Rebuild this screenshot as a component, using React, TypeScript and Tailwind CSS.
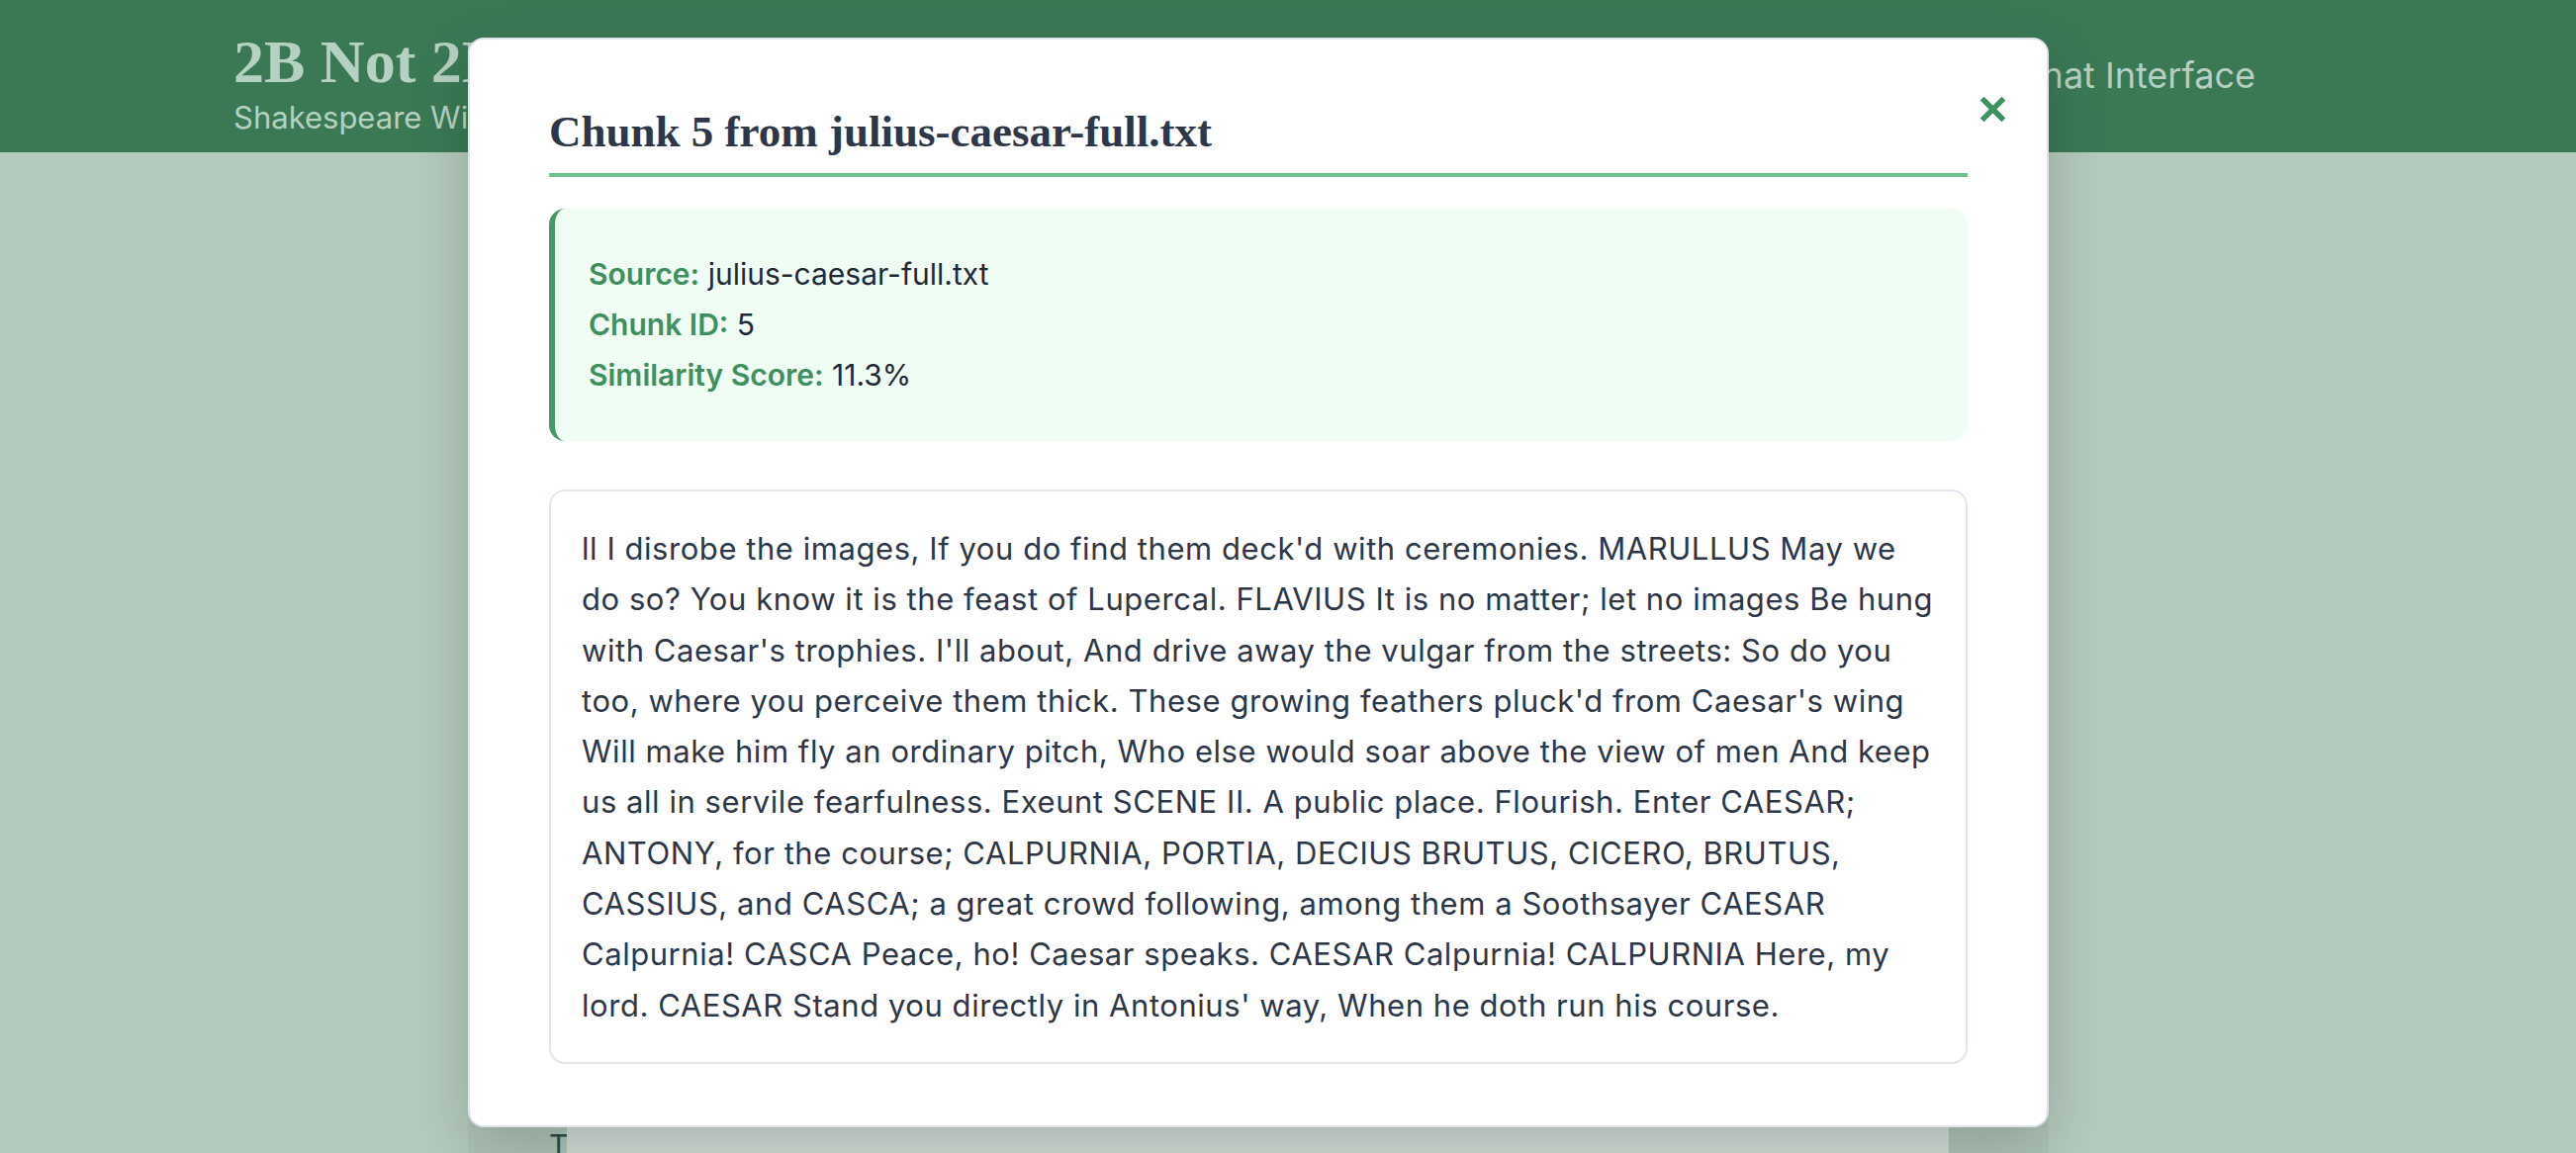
import { useState } from 'react';

const chunkText =
    "ll I disrobe the images, If you do find them deck'd with ceremonies. MARULLUS May we do so? You know it is the feast of Lupercal. FLAVIUS It is no matter; let no images Be hung with Caesar's trophies. I'll about, And drive away the vulgar from the streets: So do you too, where you perceive them thick. These growing feathers pluck'd from Caesar's wing Will make him fly an ordinary pitch, Who else would soar above the view of men And keep us all in servile fearfulness. Exeunt SCENE II. A public place. Flourish. Enter CAESAR; ANTONY, for the course; CALPURNIA, PORTIA, DECIUS BRUTUS, CICERO, BRUTUS, CASSIUS, and CASCA; a great crowd following, among them a Soothsayer CAESAR Calpurnia! CASCA Peace, ho! Caesar speaks. CAESAR Calpurnia! CALPURNIA Here, my lord. CAESAR Stand you directly in Antonius' way, When he doth run his course.";

const sans = "font-['Inter','Noto_Sans',sans-serif]";

export default function App() {
    const [open, setOpen] = useState(true);

    return (
        <div className={`relative h-[1166px] w-full overflow-hidden bg-[#b4cabd] ${sans}`}>
            {/* page behind the modal */}
            <header className="flex h-[154px] items-start justify-between bg-[#3b7955] pr-[324px] pl-[236px] pt-[31px]">
                <div className="flex flex-col gap-[10px]">
                    <h1 className="font-['Liberation_Serif','DejaVu_Serif',serif] text-[62px] leading-none font-bold text-[#b5d1c1]">
                        2B Not 2B
                    </h1>
                    <p className="text-[31px] leading-none text-[#b5d1c1]">Shakespeare Wisdom Assistant</p>
                </div>
                <nav className="mt-[27px] flex gap-10 text-[36px] leading-none text-[#b5cfc0]">
                    <span>Chat Interface</span>
                </nav>
            </header>

            <main className="flex h-[1012px] flex-col">
                <div className="ml-[473px] flex w-[1598px] flex-1 flex-col justify-end bg-[#adc3b6]">
                    <div className="flex h-[66px]">
                        <div className="w-[100px] pt-[43px] pl-[82px] text-[30px] leading-none text-[#2f4a3e]">T</div>
                        <div className="w-[1397px] bg-gradient-to-b from-[#d3ddd7] to-[#d0dbd4]" />
                    </div>
                </div>
            </main>

            {/* modal */}
            {open && (
                <div className="absolute inset-0 flex items-start">
                    <div className="relative mt-[38px] ml-[473px] w-[1598px] rounded-[16px] border-2 border-[#dfe3ec] bg-white px-20 pt-[66px] pb-[62px] shadow-[0_20px_60px_rgba(0,0,0,0.18)]">
                        <button
                            onClick={() => setOpen(false)}
                            className="absolute top-[57px] right-[41px] flex h-[27px] w-[27px] items-center justify-center"
                        >
                            <svg viewBox="0 0 24 24" className="h-[27px] w-[27px]">
                                <path d="M4 4 L20 20 M20 4 L4 20" stroke="#3f9161" strokeWidth="4.8" strokeLinecap="square" fill="none" />
                            </svg>
                        </button>

                        <h2 className="border-b-4 border-[#6cc38b] pb-[15px] font-['Liberation_Serif','DejaVu_Serif',serif] text-[45px] leading-[1.2] font-bold text-[#2d3748]">
                            Chunk 5 from julius-caesar-full.txt
                        </h2>

                        <div className="mt-8 rounded-[16px] border-l-[6px] border-[#4a9666] bg-[#f0fdf4] py-[41px] pl-[34px] text-[30px] leading-[51px] text-[#1f2937]">
                            <p>
                                <span className="font-semibold text-[#3f8f5f]">Source:</span> julius-caesar-full.txt
                            </p>
                            <p>
                                <span className="font-semibold text-[#3f8f5f]">Chunk ID:</span> 5
                            </p>
                            <p>
                                <span className="font-semibold text-[#3f8f5f]">Similarity Score:</span> 11.3%
                            </p>
                        </div>

                        <div className="mt-[49px] rounded-[16px] border-2 border-[#e0e5ef] bg-white px-[31px] py-[32px] text-[31px] leading-[51.3px] tracking-[0.55px] text-[#2d3748]">
                            {chunkText}
                        </div>
                    </div>
                </div>
            )}
        </div>
    );
}
